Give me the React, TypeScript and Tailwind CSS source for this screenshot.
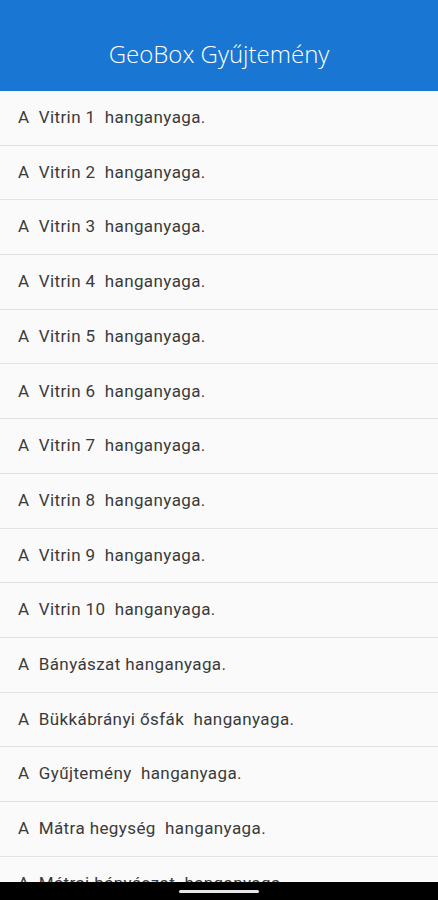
import React from 'react';

const items: string[] = [
    'A  Vitrin 1  hanganyaga.',
    'A  Vitrin 2  hanganyaga.',
    'A  Vitrin 3  hanganyaga.',
    'A  Vitrin 4  hanganyaga.',
    'A  Vitrin 5  hanganyaga.',
    'A  Vitrin 6  hanganyaga.',
    'A  Vitrin 7  hanganyaga.',
    'A  Vitrin 8  hanganyaga.',
    'A  Vitrin 9  hanganyaga.',
    'A  Vitrin 10  hanganyaga.',
    'A  Bányászat hanganyaga.',
    'A  Bükkábrányi ősfák  hanganyaga.',
    'A  Gyűjtemény  hanganyaga.',
    'A  Mátra hegység  hanganyaga.',
    'A  Mátrai bányászat  hanganyaga.',
];

const App: React.FC = () => {
    return (
        <div className="w-[438px] h-[900px] overflow-hidden flex flex-col bg-[#fafafa]" style={{ fontFamily: 'Roboto, "Liberation Sans", sans-serif' }}>
            <header className="h-[91px] shrink-0 bg-[#1976d2] flex items-center justify-center pt-[16px]">
                <h1 className="text-white text-[24px] font-light" style={{ fontFamily: '"Open Sans", "DejaVu Sans", sans-serif' }}>
                    GeoBox Gyűjtemény
                </h1>
            </header>
            <div className="flex-1 overflow-hidden">
                {items.map((label) => (
                    <div key={label} className="h-[54.7px] border-b border-[#e3e3e3] flex items-center px-[18px]">
                        <span className="text-[17px] tracking-[0.4px] text-[#3a3a3a] whitespace-pre">{label}</span>
                    </div>
                ))}
            </div>
            <div className="absolute left-0 top-[882px] w-[438px] h-[18px] bg-black flex items-center justify-center">
                <div className="w-[80px] h-[3px] rounded-full bg-[#e6e6e6]" />
            </div>
        </div>
    );
};

export default App;
